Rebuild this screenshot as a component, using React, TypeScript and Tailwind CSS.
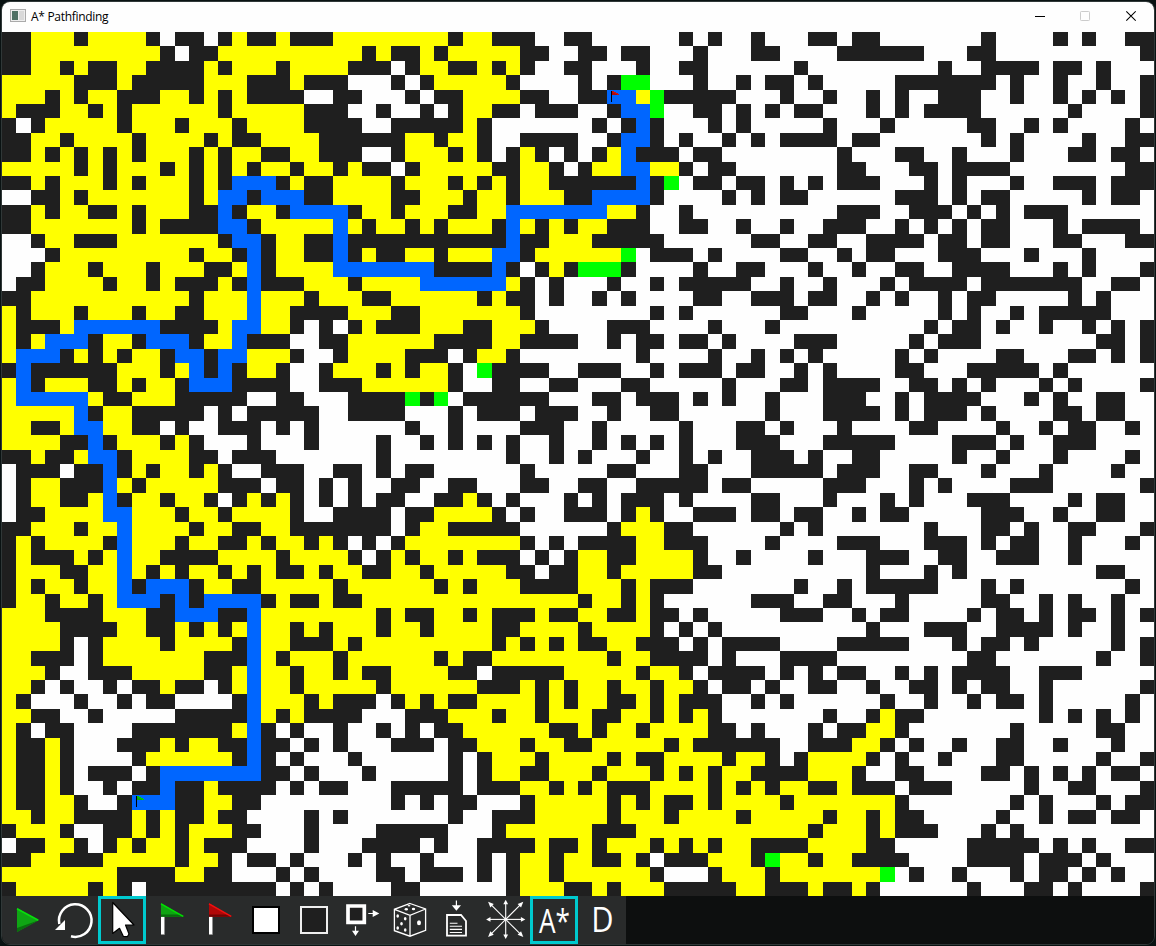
import type { ReactNode } from "react";

// W: open, K: wall, Y: visited, B: path, G: frontier
const TOP: string[] = [
  "KKYYYKYYYYKWKKWK YKKYKKKYYYYYYYYK YYKKKWWKKWWWWWWK WKWWKWWWKKWKKWWW WWWWKWWWWKWKWWKK",
  "KKYYYYYYYYYKWKKY YYYYYYYYYKYKKYKY YYYYKKWWKKWKKWWW KWWWKKWWWWKKKKKK WWWKKWWWWWWWWWWK",
  "KKYYKYKKYYKKKKYK YYYKYYYYKKKWKYYK KYKYKWWKKWWWKWWK KWWWWWWKWWWWWWWW WKWWKKKKWKKWKWWW",
  "YYYYYKKKYKKKKKYY YKKKYKKKWWWKWKYY YYYKWWWWKWKGGWWW KWWKWKKWKWWWWWKK KKKKKWKWWKWWKWWK",
  "YYYKYKYYKKKYYKYK YKKKKWWKKWWWKWKK YYYYKKWWKKBBYGKK KKKWWWKWWKWWKWKW WKKKWWKWWKWKWKWK",
  "YKKKYYKYKYYYYYYK YYYYYKKKWWKWWKWK YYKKWKKKWWKBBGWW KKWKWKWKKWWWKWKW KKKKWWWWWWKWWWWK",
  "KWKYYYYYKYYYKYYY KYYYYKKKKWWKKKKK YKWWWWWWWKWKBKWW WKWKWWWWWKWWWKWW WWWKKWWKWKWWWWKW",
  "KKYYKYYYYKYYYYKY KKYYYYKKKKKKYYKY YKWWKKKKWWKBBKWK WWKWKWKKKKWKKWWW WWWWKWKWWWWKWWKK",
  "KKYKYKYKYKYYYKYK YYKKYYKKKWWKYYYK YKWKYKWKWKYBKKKW KKWWWWWWWWKWWWKK WWKWWWKWWWKKWKKW",
  "YYYYYKYKYYYKYKYK YKYYKYYKYKKWKYYY YYKKYYKWKYYBBYYK WKKWWWWWWWKKWWWK KWKKKKWWWWWWWWKK",
  "KKYKYYYKYKYYYKYK BBBKYKKYYYYKYYYK YKYKYYKKKKKKBKGW KKWKKWKWKWKKKWWW KWKWWWKWWKKKWKKK",
  "WWKKYKYYYYYYYKYB BKBBBKKYYYYKKYYY KYYKYYYKKBBBBKWW WWKWKWKKWWWWWWKK KWKWKKWWWWWKWKKW",
  "KKYKYYKKYKYYYKKB KYYKBBBBKYYKYYYK KYYBBBBBBBYYKWWK WWWWWWWWWWKKKWWK KKWKWKWKKKWWWWWW",
  "KKYYYYYYYKYKKKKB BKYYYYYBYKYYKYKY YYKBYKYKYYKKKWWK KWWKWWKWWKKKWWKW KWKWKKWWWKWKKKKW",
  "WWKYYKKKYYYYYYYK BBKYYKKBKKKKKKKK KKKBKKYYYKKKKKWW WWWWKKWWKKWWKKKK WKKWKKWWWKKWWWKK",
  "WWWKYYYYYYYYYKYY KBKYYKKBKYKKYYKY YYBBKYYYYYYGWKKK WKWWWWKKWWKWKKWW WKKKWWWKWWWKWWWW",
  "WWKYYYKYYYKYYYKK YBKYYYYBBBBBBBKK KKBKWKYKGGGKWWWW KWWKKWWWKWWKWWKK WWKKKKWWWKWKWWWK",
  "WKKYYYYKYYKYKKKY KBKKKYYYKYYYYBBB BBBYKWKWWWKWWKWK KKKKWWKWWKWWWKWK KKKWKKKKKKKWWKKW",
  "KKYYYYYYYYYYYKYY YBYYYKYYYKKYYYYY YKYKKWKWWKWKWWWW KKWWKKKWKKWWKWKW WKWKKWWWWWKWKWWW",
  "YKYYYKYYYKYYKKYY YBYYKKKKYYYKKYYY YYYYKWWWWWWWWKWK WWWWWWKKWWWKWWWW WKWKWWKWKKKKKWWW",
  "YKKKYBBBBBBKKKKY BBYYKWKWKYKKKYYY KKYYYKWWWWKKKWWW WKWWWKWWWWWWWWWW KWKKWKWWKWWKWKWK",
  "YKYBBBKYYKBBBKYY BKKKWWKKYYYYYYKK KKYYKKKKWWKWKKWK KWKWWWWKKKWWWWWK WKKKWWWWWWWWKKWK",
  "YBBBKYKYKYYKBBKB BYYYKWWKYYYYKKKW KYYKWWWWWWWWKWWW WKWWKWKWKWWWWWKW KWWWWKKWWWKKWKWK",
  "KBKKKKKKYYYKYBKB KYYKWWKYYYKYKYYK WGKKKKWWKKKWWKWK KKWKKWWKWKWWWWKK WWWKKKKKWKWWWWWW",
  "YBKYYYKKYKYYKBBB KKKKWWKKKYYYYYYK WWKKWWKKWWWKKWWW WWKWWWKKWKKKKWWK KWKWKWWWKWKWWWWK",
  "YBBBBBYKKYYYKKKK KWWKKWWWKKKKGKGW KKKKKKWWWKKWKKKW KWKWWKWWWKKKWWKW KKKKWWWKWKWWKKWW",
  "YYYYYBKYYKKKKKWK WKKKKKWWKKKKWWWK WKKKWKKKWWKWWKKW WWWWWKWWWKKKKWKW KKKWKWWWWKKWKKWW",
  "YYKKYBBYYKKWKWWK KKWKWKWWWWWWKWWK WWWWKKKWWKWWWWWK WWWKKWKWWWKWWWWK KWWWWKWWKWKKWWKW",
  "YYYYKKBKYYYKYKWW WKWWWKWWWWKWWKWK WKWKWWKWWKWKWKWK WWWKKKWWWKKKKKWW WWKKKWKWWKKKWWWW",
  "KKYKKYBBKYYYYKKW KKKWWWWWWWKWWWWW WWWKWWKWKWWWKWWK WKWWKKKWKWWKKWWW WWKWWKWWWKWWWWKW",
];

const BOTTOM: string[] = [
  "WKKKWKKBKYKYYKYK WWKKKWWKKWKWKKWW WWWWKWWWWWKKWWWK KWWWKKKKKWKKKWWK KWWWKWWWKWWWWKWW",
  "WKYYKKKBYKYYYYYK KKWKKWKWKWWKKWWK KWWWKKWWKKWWKKKK KWKKWWWWWKKKWWWK WKWWWWKKKWWWWWWK",
  "WKYYKKYBKYYKYYKW KYKYKWKWKWKKWWKK YKWKWWWKWKWKKKWK WWWWKKWWWKWWWKWK WWWKKKWWWWKWKKWW",
  "WKKYYYYBBYYYKYYK YYYYKWWKKKKWKKYY YYKWKWWKKKWKYKWW KKKWKKWKKWWKWKKW WWWWKKKWWKWWKKWW",
  "KKYYYKYYBYYYYKYY KKYYKKKKKKKWKYYK KKKKWWWWWWKYYYKK WWWWWWKWKWWWWWWW KWWWKKWKWWKKWWWK",
  "KYKYYYYKBYYYKYYK KYKYYKYKWKWKYYYY YYYYKWKWKKKKYYKK KWWWWKWWWWKKKWWW KKKWKWKKWWKWWWKW",
  "KYKKKYKYBYYKKKKY YYYKYYYYKWKYKYYK YKKKWKWKYYKKYYYY KWWKWWWWKWWWKKKW WKKWWKKKWWKWWWWW",
  "KYYYKKYYBYKYKYYK YKYKKYKYYKKYYKYY YYYKKWKKYYKYYYYY KKWWWWWWWWWWKWWW KWKWWWWWWWWWKKWW",
  "KYKYYKYYBKBBBKYY KKYYYYYKYYYYYYKY KYYYKKKKYYYKYKKK WWWWWWWKWWKWKKKK KWWWKWKWWWWWWWKW",
  "KYYKYYKYBBBKBKBB BBKYKKYKKYYYYYYY YYYYYYYYKYYKYKWW WWWWKKKWWKKWWWKW WWWWKKWWKWKWWKWW",
  "YYYKKKKYYYKKBBBK KBYYYYYYYYKYKKYY KYKKKYKKYYKKYKKW KWWWWWKKKWWKWKKW WWWKWKKWKWKKWKWK",
  "YYYYKKKKYYKKYKYK YBYYKYKYYYKYYKYY YYKKYYYYKYYYYKWK WKWWWWWWWWWWKWWW KKKWWKKKKWKWWKWW",
  "YYYYKWKYYYYKYYYY KBYYKKKYKYYYYYYY YYKYKYKYKKYYKKKW KWKKKKWWWWKKKKKW WWKWKKWKWWWWWKWK",
  "YYKKKWKYYYYYYYKK KBYKYYYKYYYYYYKY KKYYYYYYYYKYYKKK KWKWWWKKKKWWWWWW WWWKKWWWWWWWKWWK",
  "YYYKWWKKKYYYYYKK YBYYKYYKYKKYYYYK KWKKKKKYYYYYKYYK WKKKKWKWKWKKWWKW KWKKKKWWKKKWWWWW",
  "YYKWKWWKWKKYKKWK YBYYKYYYYYKYYYYY YKKKYKYKYYKYYKYY KWKKWKWWKKWWKWWK KWKWKKWWKWWWWWWK",
  "YKWWWKWWKWKKWWWW KBYYYKYKKKWKYKYK KYYYYKYKYYKKYKYK KKWWKWKWWWWWWKWW KWWKWKKWKWWWWWKW",
  "YYKKWWKWWWWWKKKK KBYKYKKKKWWWKKKY YYKYYKYYYKKYYKYK YKWWWWWWWKWWKYKK WWWWWWWWKWKWKWKW",
  "YKWKKWWWWKKKKKKK YBKWKWWKWWKWKWKK YYYYYYKKYKYYKYYY YKKWKWWWKWKKYYKW WWWWWWKWWWWWKKWW",
  "YKKYKWWWKKKYKYYK KBKKWKWKWWWKKKWK KYYYKYYKKYYYYYKY KKKKKKWWKKKYYKWK WWKWWKKWWKWWWKWW",
  "YKKYKWWWWKYYYYYY KBKWKWWWKWWWWWWK WKYYYKYYYYKYKKYY YYKYYKWKYYYYKWKW WKWWWKKWWWWWKWWK",
  "YKKYKWKKKWKBBBBB BBKKWKWWWKWWWWWK WKYYKKYYYKYYYKYK YKYYKKKKYYYKWWKK WWWWKKWKWKWKWKKW",
  "YKKYKWWKWKKBKKYK KKKWKWKKWWWKKKKK WKKKYYKYKYKKKYYY YKYKYKYYKKYKKKWK KKWWWWWKWWKKWWWK",
  "YKKYYKWWKBBBKKYY KKWWWWWWWWWKWKWK KWWWKYYYYYKYKYKK YKYYYYKYYYYYYYKW WWWWWWKWKWWWKWKK",
  "YYKYYKKKKYKYKKYK KWWWWKWKWWWWWWWK WWKKKYYYYYKYYYKY YYYKYYYYYKYYKYKK WWWWWKWWKWKKWKKW",
  "KYYYKWWKKYKYKYYY KKWWWKWWWWKKKKKW WWKYYYYYYKKKYYYY YYYYYYYYKYYYKYKK KWWWKWKWWWWWWWWW",
  "WKKYYKWKYKYYKYKK KWWWWKWWWKKKKWKW WKKKKYKKYKYYYKYK YKYYKKKKYYYYKKWW WWWKKKKKWKWKWWKK",
  "KKYYKKKYYYYYKYYK WKKWKWWWKWKWWKWW WKWKYYKYYKKYKWKK KYYYKGYYKYYKKKKW WWWKKKKWKKKWKWWW",
  "YYYYYYYYKKKKYYKK WWWKWKWWWWKKWKKK WKWKYYKYYYYYYKWW WKYYYKYYYYYYYGWK WWKWWWKWKKWKWKWW",
  "KYYYYYKYKWKKKKKK KKKWKWKWWWWKKWWW WWWKYYYKKYKYYYKK KKKYYKKKYKKYKWWW WWWKWWWKKWKWWWWK",
];

const CELLS = [...TOP, ...BOTTOM].map((row) => row.replaceAll(" ", "").split(""));

const FILL: Record<string, string> = {
  W: "bg-[#fefefe]",
  K: "bg-[#1f1f1f]",
  Y: "bg-[#ffff00]",
  B: "bg-[#0066ff]",
  G: "bg-[#00ff00]",
};

function Flag({ color }: { color: "green" | "red" }) {
  const [base, light, dark] =
    color === "green" ? ["#0fa312", "#00e000", "#096b0c"] : ["#b00808", "#f01010", "#700404"];
  return (
    <svg viewBox="0 0 48 48" className="block h-12 w-12">
      <path d="M15 20H18.7V38.7H15z" fill="#bbb" />
      <path d="M15 20H18V38H15z" fill="#fff" />
      <path d="M15 7L38 20.7H15z" fill={base} />
      <path d="M15 18.4H34L38 20.7H15z" fill={dark} />
      <path d="M15 7.8L37.2 20.4" stroke={light} strokeWidth="1.5" fill="none" />
    </svg>
  );
}

function Marker({ fill, edge }: { fill: string; edge: string }) {
  return (
    <svg viewBox="0 0 14 14" className="block h-[14px] w-[14px]" shapeRendering="crispEdges">
      <path d="M4 1H5V12H4z" fill="#000" />
      <path d="M5 1H7V2H9V3H10V4H12V5H5z" fill={fill} />
      <path d="M5 1H7V2H9V3H11V4H12V5H10V4H8V3H6V2H5z" fill={edge} />
    </svg>
  );
}

function Board() {
  return (
    <div className="grid h-[864px] w-[1152px] shrink-0 grid-cols-[repeat(16,14px_15px_14px_15px_14px)] grid-rows-[repeat(12,14px_15px_14px_15px_14px)]">
      {CELLS.flatMap((row, r) =>
        row.map((c, x) => (
          <div key={`${r}-${x}`} className={FILL[c]}>
            {r === 4 && x === 42 && <Marker fill="#b00808" edge="#c81010" />}
            {r === 53 && x === 9 && <Marker fill="#0fa312" edge="#00d000" />}
          </div>
        )),
      )}
    </div>
  );
}

function Tool({ active, label, children }: { active?: boolean; label: string; children: ReactNode }) {
  return (
    <button
      aria-label={label}
      className={
        active
          ? "h-12 w-12 shrink-0 bg-[#292b2b] shadow-[inset_0_0_0_3px_#00cacf]"
          : "h-12 w-12 shrink-0 bg-[#292b2b]"
      }
    >
      {children}
    </button>
  );
}

function Icon({ children }: { children: ReactNode }) {
  return (
    <svg viewBox="0 0 48 48" className="block h-12 w-12" fill="none">
      {children}
    </svg>
  );
}

const RAYS = [0, 45, 90, 135, 180, 225, 270, 315];

function Toolbar() {
  return (
    <div className="flex h-12 w-[1152px] shrink-0 bg-[#0d0f0f]">
      <Tool label="Run">
        <Icon>
          <path d="M15 12L36.7 24.3L15 36z" fill="#0fa514" />
          <path d="M15 32L36.7 24.3L15 36z" fill="#0a6e0e" />
          <path d="M15 12.7L36.3 24.3" stroke="#08dd0c" strokeWidth="1.7" />
        </Icon>
      </Tool>
      <Tool label="Reset">
        <Icon>
          <path d="M9.3 28A16.3 16.3 0 1 1 21 40.3" stroke="#fff" strokeWidth="2.5" />
          <path d="M15 24V34H5z" fill="#fff" />
        </Icon>
      </Tool>
      <Tool label="Select" active>
        <Icon>
          <path
            d="M14.7 6.5V37.5L21.5 32.3L25.3 40.3L29.3 40.7L31 38L27.5 29H36z"
            fill="#fff"
            stroke="#000"
            strokeWidth="1.2"
            strokeLinejoin="round"
          />
        </Icon>
      </Tool>
      <Tool label="Start">
        <Flag color="green" />
      </Tool>
      <Tool label="Goal">
        <Flag color="red" />
      </Tool>
      <Tool label="Open cell">
        <Icon>
          <path d="M11 11H37V37H11z" fill="#fff" stroke="#000" strokeWidth="2" />
        </Icon>
      </Tool>
      <Tool label="Wall cell">
        <Icon>
          <path d="M11 11H37V37H11z" fill="#1f1f1f" stroke="#eee" strokeWidth="2" />
        </Icon>
      </Tool>
      <Tool label="Resize">
        <Icon>
          <path d="M10 10H26.3V26.3H10z" fill="#1f1f1f" stroke="#fff" strokeWidth="3.7" />
          <path d="M30.3 17.5H36M17.5 30.3V36" stroke="#fff" strokeWidth="1.2" />
          <path d="M34.7 14L41.3 17.5L34.7 21zM14 34.7H21L17.5 40z" fill="#fff" />
        </Icon>
      </Tool>
      <Tool label="Random">
        <Icon>
          <path
            d="M24 7.5L39.6 13V34.3L24 40.2L8.4 34.7V13.3zM8.4 13.3L24 19.3L39.6 13M24 19.3V40.2"
            stroke="#fff"
            strokeWidth="1.3"
          />
          <g fill="#fff">
            <ellipse cx="11.7" cy="20" rx="1.3" ry="1.7" />
            <ellipse cx="19.2" cy="22.8" rx="1.3" ry="1.7" />
            <ellipse cx="15.5" cy="27.8" rx="1.3" ry="1.7" />
            <ellipse cx="11.7" cy="32" rx="1.3" ry="1.7" />
            <ellipse cx="19.2" cy="34" rx="1.3" ry="1.7" />
            <ellipse cx="33" cy="26.7" rx="2" ry="2.5" />
            <ellipse cx="20.3" cy="13.2" rx="1.7" ry="1.2" />
            <ellipse cx="27.5" cy="13" rx="1.7" ry="1.2" />
            <ellipse cx="23" cy="9.7" rx="1.4" ry="0.8" />
          </g>
        </Icon>
      </Tool>
      <Tool label="Load">
        <Icon>
          <path d="M13 19H27L32 25V39.7H13z" stroke="#fff" strokeWidth="1.8" />
          <path d="M15.8 27.3H23.5M15.8 30.3H28M15.8 33.4H28M15.8 36.5H28" stroke="#fff" strokeWidth="1.1" />
          <path d="M22.4 4.5V10" stroke="#fff" strokeWidth="1.2" />
          <path d="M17.8 9.2H27L22.4 14.8z" fill="#fff" />
        </Icon>
      </Tool>
      <Tool label="Diagonals">
        <Icon>
          {RAYS.map((a) => (
            <g key={a} transform={`translate(23.7 23.4) rotate(${a}) scale(${a % 90 ? 1.27 : 1} 1)`}>
              <path d="M0 0H17" stroke="#fff" strokeWidth="1.1" />
              <path d="M19.6 0L15.2 -2.4V2.4z" fill="#fff" />
            </g>
          ))}
        </Icon>
      </Tool>
      <Tool label="A star" active>
        <Icon>
          <text x="9" y="37" fontSize="33.5" textLength="31" lengthAdjust="spacingAndGlyphs" fill="#fff" className="font-['Open_Sans',sans-serif]">
            A*
          </text>
        </Icon>
      </Tool>
      <Tool label="Dijkstra">
        <Icon>
          <text x="13.3" y="36.3" fontSize="35" textLength="22.3" lengthAdjust="spacingAndGlyphs" fill="#fff" className="font-['Open_Sans',sans-serif]">
            D
          </text>
        </Icon>
      </Tool>
    </div>
  );
}

function TitleBar() {
  return (
    <div className="flex h-[30px] w-[1152px] shrink-0 items-start bg-[#fefefe] pl-2">
      <svg viewBox="0 0 16 13" className="mt-[7px] h-[13px] w-4">
        <rect x="0.5" y="0.5" width="15" height="12" fill="#eee" stroke="#aaa" />
        <rect x="2" y="2" width="6" height="9" fill="#4f7064" />
        <rect x="9" y="2" width="5" height="9" fill="#d9d9d9" />
      </svg>
      <span className="ml-[5px] mt-[6px] whitespace-nowrap font-['Open_Sans',sans-serif] text-[12px] leading-[18px] tracking-[-0.3px] text-black">
        A* Pathfinding
      </span>
      <svg viewBox="0 0 104 30" className="ml-auto mr-[18px] h-[30px] w-[104px]" fill="none">
        <path d="M3 14.5H13" stroke="#000" />
        <rect x="48.5" y="9.5" width="9" height="9" rx="0.8" stroke="#ccc" />
        <path d="M94.3 9.3L103.7 18.7M103.7 9.3L94.3 18.7" stroke="#000" strokeWidth="1.1" />
      </svg>
    </div>
  );
}

export default function App() {
  return (
    <div className="h-[946px] w-[1156px] overflow-hidden bg-[#091212] p-px">
      <div className="flex h-[944px] w-[1154px] flex-col overflow-hidden rounded-[9px] border border-[#303838]">
        <TitleBar />
        <Board />
        <Toolbar />
      </div>
    </div>
  );
}
